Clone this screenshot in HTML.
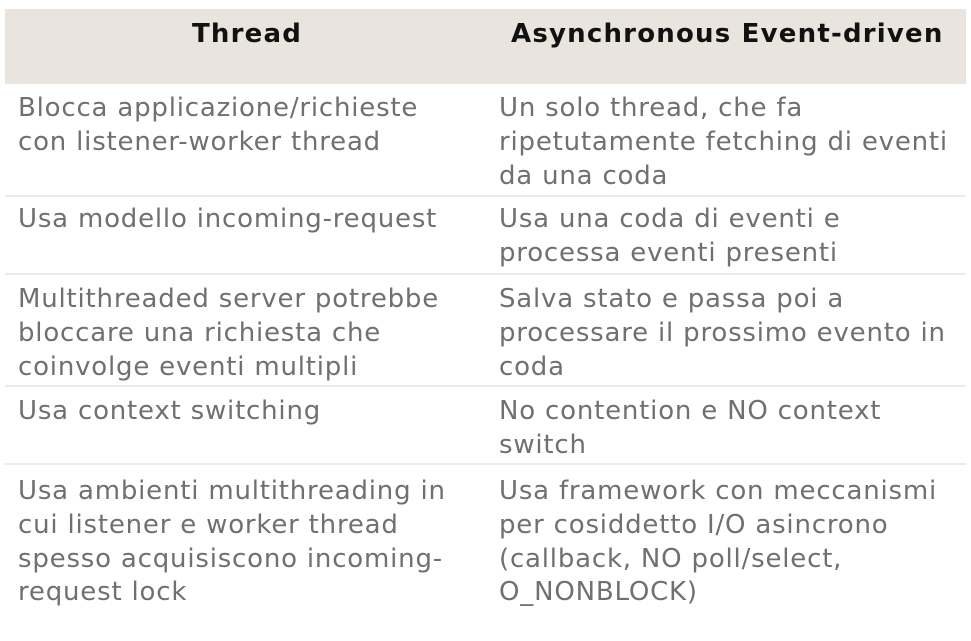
<!DOCTYPE html>
<html><head><meta charset="utf-8"><style>
body{margin:0;width:971px;height:641px;background:#fff;position:relative;overflow:hidden;font-family:"DejaVu Sans","Liberation Sans",sans-serif;}
.h{position:absolute;left:5px;top:9px;width:961px;height:75px;background:#e9e5de;}
.ht{position:absolute;top:17px;font-weight:bold;font-size:26px;color:#111;line-height:34px;white-space:nowrap;letter-spacing:1.2px}
.l{position:absolute;left:5px;width:961px;height:2px;background:#ececec}
.c{position:absolute;font-size:26px;line-height:33.8px;color:#707070;white-space:nowrap;letter-spacing:0.8px}
.a{left:18px}.b{left:499px}
</style></head><body>
<div class="h"></div>
<div class="ht" style="left:192px">Thread</div>
<div class="ht" style="left:511px">Asynchronous Event-driven</div>
<div class="l" style="top:195px"></div>
<div class="l" style="top:273px"></div>
<div class="l" style="top:385px"></div>
<div class="l" style="top:463px"></div>
<div class="c a" style="top:92px">Blocca applicazione/richieste<br>con listener-worker thread</div>
<div class="c b" style="top:92px">Un solo thread, che fa<br>ripetutamente fetching di eventi<br>da una coda</div>
<div class="c a" style="top:203px">Usa modello incoming-request</div>
<div class="c b" style="top:203px">Usa una coda di eventi e<br>processa eventi presenti</div>
<div class="c a" style="top:283px">Multithreaded server potrebbe<br>bloccare una richiesta che<br>coinvolge eventi multipli</div>
<div class="c b" style="top:283px">Salva stato e passa poi a<br>processare il prossimo evento in<br>coda</div>
<div class="c a" style="top:395px">Usa context switching</div>
<div class="c b" style="top:395px">No contention e NO context<br>switch</div>
<div class="c a" style="top:475px">Usa ambienti multithreading in<br>cui listener e worker thread<br>spesso acquisiscono incoming-<br>request lock</div>
<div class="c b" style="top:475px">Usa framework con meccanismi<br>per cosiddetto I/O asincrono<br>(callback, NO poll/select,<br>O_NONBLOCK)</div>
</body></html>
